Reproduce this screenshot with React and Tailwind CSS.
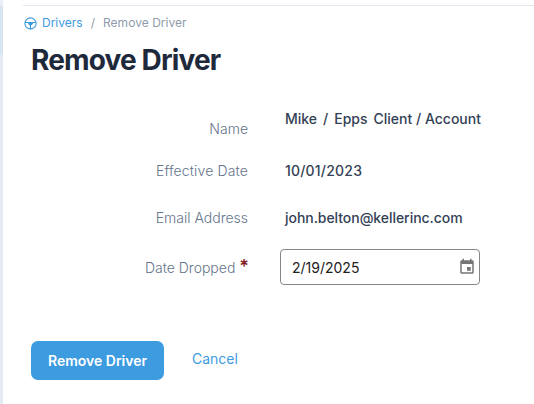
function SteeringWheelIcon() {
  return (
    <svg viewBox="0 0 13 13" className="size-[13px] shrink-0" fill="none">
      <circle cx="6.5" cy="6.5" r="5.6" stroke="currentColor" strokeWidth="1.1" />
      <path d="M1 5.5H12" stroke="currentColor" strokeWidth="1" />
      <path d="M4 5H9V6.6L7.7 8.3H7V12H6V8.3H5.3L4 6.6Z" fill="currentColor" />
    </svg>
  );
}

function CalendarIcon() {
  return (
    <svg viewBox="0 0 24 24" className="size-[18px] shrink-0" fill="#757575">
      <path d="M17 12h-5v5h5v-5zM16 1v2H8V1H6v2H5c-1.11 0-1.99.9-1.99 2L3 19c0 1.1.89 2 2 2h14c1.1 0 2-.9 2-2V5c0-1.1-.9-2-2-2h-1V1h-2zm3 18H5V8h14v11z" />
    </svg>
  );
}

function Label({ children, className = "" }) {
  return (
    <div className={`w-[217px] shrink-0 text-right font-light text-[#64748b] ${className}`}>
      {children}
    </div>
  );
}

function Value({ children, className = "" }) {
  return (
    <div className={`ml-[37px] font-medium text-[#334155] ${className}`}>{children}</div>
  );
}

export default function App() {
  return (
    <div className="flex h-[404px] w-[534px] overflow-hidden bg-white font-['Inter',sans-serif]">
      <div className="flex w-[3px] shrink-0 flex-col bg-[#e5ebf2]">
        <div className="h-[6px] bg-[#e9eff5]" />
        <div className="h-[49px] bg-[#d7e5f1]" />
      </div>

      <div className="flex-1">
        <div className="mt-[5px] ml-5 h-px bg-[#e2e8f0]" />

        <nav className="mt-2 ml-[21px] flex h-[18px] items-center text-[12px] whitespace-nowrap">
          <a className="flex items-center gap-[5px] text-[#3d9be0]">
            <SteeringWheelIcon />
            <span>Drivers</span>
          </a>
          <span className="ml-[8px] text-[#8f9bab]">/</span>
          <span className="ml-[8px] tracking-[0.04px] text-[#8f9bab]">Remove Driver</span>
        </nav>

        <div className="ml-7">
          <h1 className="mt-[10px] h-[36px] text-[28px] leading-[37px] font-bold tracking-[-0.85px] text-[#1e293b]">
            Remove Driver
          </h1>

          <div className="mt-[31px] flex flex-col text-[14px] leading-[20px] whitespace-nowrap">
            <div className="flex h-[30px] items-start">
              <div className="pt-[10px]">
                <Label>Name</Label>
              </div>
              <Value>
                <span className="mr-[6px]">Mike</span>
                <span className="mr-[6px]">/</span>
                <span className="mr-[6px]">Epps</span>
                <span>Client / Account</span>
              </Value>
            </div>

            <div className="mt-[22px] flex h-5 items-center">
              <Label className="tracking-[0.14px]">Effective Date</Label>
              <Value className="tracking-[0.2px]">10/01/2023</Value>
            </div>

            <div className="mt-[27px] flex h-5 items-center">
              <Label>Email Address</Label>
              <Value className="tracking-[-0.05px]">john.belton@kellerinc.com</Value>
            </div>

            <div className="mt-[21px] flex h-9 items-center">
              <Label>
                Date Dropped{" "}
                <span className="-mr-px text-[18px] font-semibold text-[#7f1d1d]">*</span>
              </Label>
              <div className="ml-[32px] flex h-9 w-[200px] items-center justify-between rounded-[4px] border border-[#868686] pr-[3px] pl-[11px] text-[#212121]">
                <span className="pt-px">2/19/2025</span>
                <CalendarIcon />
              </div>
            </div>
          </div>

          <div className="mt-14 flex h-[39px] items-center text-[14px]">
            <button className="h-[39px] w-[133px] rounded-[7px] bg-[#3d9be0] font-semibold whitespace-nowrap text-white">
              Remove Driver
            </button>
            <a className="ml-7 pb-1 text-[#3d9be0]">Cancel</a>
          </div>
        </div>
      </div>
    </div>
  );
}
